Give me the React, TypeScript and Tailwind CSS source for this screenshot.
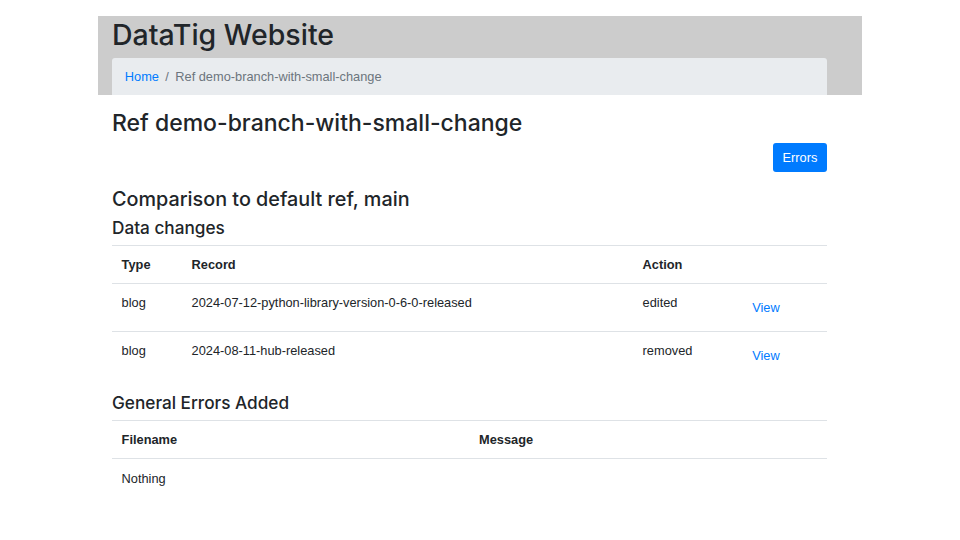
import React from 'react';

const changes = [
  { type: 'blog', record: '2024-07-12-python-library-version-0-6-0-released', action: 'edited' },
  { type: 'blog', record: '2024-08-11-hub-released', action: 'removed' },
];

const heading = { fontFamily: 'Inter, "Liberation Sans", sans-serif' };

export default function App() {
  return (
    <div className="min-h-[540px] bg-white pt-4 text-[12.8px] leading-[1.5] text-[#212529]" style={{ fontFamily: '"Liberation Sans", Arial, sans-serif' }}>
      <div className="mx-auto w-[764px]">
        <div className="bg-[#cccccc] pl-[14px]">
          <h1 className="mb-[5px] h-[37px] text-[28.5px] font-medium leading-[37px]" style={heading}>DataTig Website</h1>
          <nav className="flex h-[37px] w-[715px] items-center rounded-t-[3px] bg-[#e9ecef] px-[12.8px]">
            <a className="text-[#007bff]" href="#">Home</a>
            <span className="px-[6.4px] text-[#6c757d]">/</span>
            <span className="text-[#6c757d]">Ref demo-branch-with-small-change</span>
          </nav>
        </div>

        <main className="ml-[14px] w-[715px] pt-[14px]">
          <h2 className="mb-[6px] text-[23px] font-medium leading-[28px]" style={heading}>Ref demo-branch-with-small-change</h2>
          <div className="flex justify-end">
            <button className="flex h-[29px] items-center rounded-[3px] bg-[#007bff] px-[9.6px] text-[12.8px] text-white">Errors</button>
          </div>

          <h3 className="mt-[15px] mb-[7px] text-[19.8px] font-medium leading-[24px]" style={heading}>Comparison to default ref, main</h3>
          <h4 className="mb-[7px] text-[17.2px] font-medium leading-[20px]" style={heading}>Data changes</h4>

          <table className="mb-[14px] w-full border-collapse">
            <thead>
              <tr className="border-t border-b border-[#dee2e6] text-left">
                <th className="w-[70px] px-[9.6px] py-[9px] align-top font-bold">Type</th>
                <th className="w-[451px] px-[9.6px] py-[9px] align-top font-bold">Record</th>
                <th className="w-[100px] px-[9.6px] py-[9px] align-top font-bold">Action</th>
                <th className="px-[9.6px] py-[9px]"></th>
              </tr>
            </thead>
            <tbody>
              {changes.map((c, i) => (
                <tr key={c.record} className={i === 0 ? 'border-b border-[#dee2e6]' : ''}>
                  <td className="px-[9.6px] py-[9.3px] align-top">{c.type}</td>
                  <td className="px-[9.6px] py-[9.3px] align-top">{c.record}</td>
                  <td className="px-[9.6px] py-[9.3px] align-top">{c.action}</td>
                  <td className="px-[9.6px] py-[9.3px] align-top">
                    <a href="#" className="inline-block px-[9.6px] py-[4.6px] leading-[1.5] text-[#007bff]">View</a>
                  </td>
                </tr>
              ))}
            </tbody>
          </table>

          <h4 className="mb-[7px] text-[17.2px] font-medium leading-[20px]" style={heading}>General Errors Added</h4>
          <table className="w-full border-collapse">
            <thead>
              <tr className="border-t border-b border-[#dee2e6] text-left">
                <th className="w-1/2 px-[9.6px] py-[9px] align-top font-bold">Filename</th>
                <th className="w-1/2 px-[9.6px] py-[9px] align-top font-bold">Message</th>
              </tr>
            </thead>
            <tbody>
              <tr>
                <td className="px-[9.6px] py-[9.4px]" colSpan={2}>Nothing</td>
              </tr>
            </tbody>
          </table>
        </main>
      </div>
    </div>
  );
}
